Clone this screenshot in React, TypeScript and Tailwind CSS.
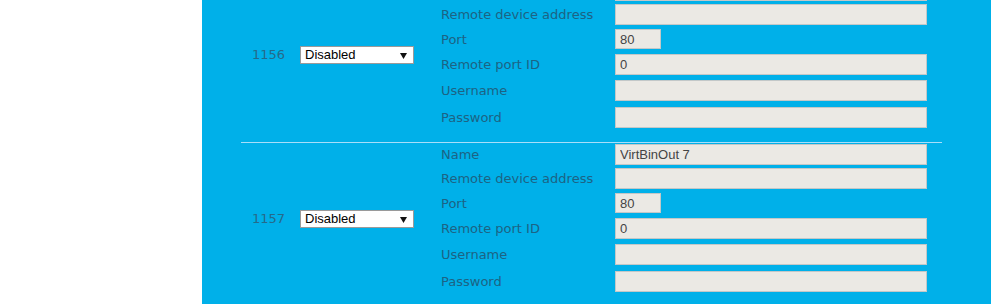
const blocks = [
  { id: "1156", name: "VirtBinOut 6" },
  { id: "1157", name: "VirtBinOut 7" },
];

function Field({ label, value = "", narrow = false, h }: { label: string; value?: string; narrow?: boolean; h: string }) {
  return (
    <div className={`flex items-start ${h}`}>
      <div
        className={`w-[175px] shrink-0 flex items-center pl-px pt-px font-['DejaVu_Sans',Verdana,sans-serif] text-[13px] text-[#1d6384] ${
          narrow ? "h-[20px]" : "h-[21px]"
        }`}
      >
        {label}
      </div>
      <input
        readOnly
        value={value}
        className={`border border-[#c3c8c8] bg-[#ebe9e4] px-[4px] font-['Liberation_Sans',Arial,sans-serif] text-[13px] text-[#444] outline-none ${
          narrow ? "h-[20px] w-[46px]" : "h-[21px] w-[312px]"
        }`}
      />
    </div>
  );
}

function Block({ id, name }: { id: string; name: string }) {
  return (
    <div className="flex items-center border-b border-[#a9defa] pt-px pb-[14px]">
      <div className="flex w-[199px] shrink-0 items-center pl-[11px] pt-[2px]">
        <span className="w-[48px] font-['DejaVu_Sans',Verdana,sans-serif] text-[13px] text-[#256a8a]">
          {id}
        </span>
        <div className="flex h-[18px] w-[114px] items-center justify-between border border-[#9a9a9a] bg-white pl-[4px] pr-[6px] font-['Liberation_Sans',Arial,sans-serif] text-[13px] text-black">
          <span>Disabled</span>
          <svg width="7" height="7" viewBox="0 0 7 7">
            <path d="M0 1h7L3.5 7z" fill="#111" />
          </svg>
        </div>
      </div>
      <div className="flex flex-col">
        <Field h="h-[24px]" label="Name" value={name} />
        <Field h="h-[25px]" label="Remote device address" />
        <Field h="h-[25px]" label="Port" value="80" narrow />
        <Field h="h-[26px]" label="Remote port ID" value="0" />
        <Field h="h-[27px]" label="Username" />
        <Field h="h-[21px]" label="Password" />
      </div>
    </div>
  );
}

export default function App() {
  return (
    <div className="flex h-[304px] overflow-hidden bg-white">
      <div className="w-[202px] shrink-0" />
      <div className="flex-1 bg-[#00b0e9] pl-[39px] pr-[49px]">
        <div className="-mt-[21px]">
          {blocks.map((b) => (
            <Block key={b.id} id={b.id} name={b.name} />
          ))}
        </div>
      </div>
    </div>
  );
}
